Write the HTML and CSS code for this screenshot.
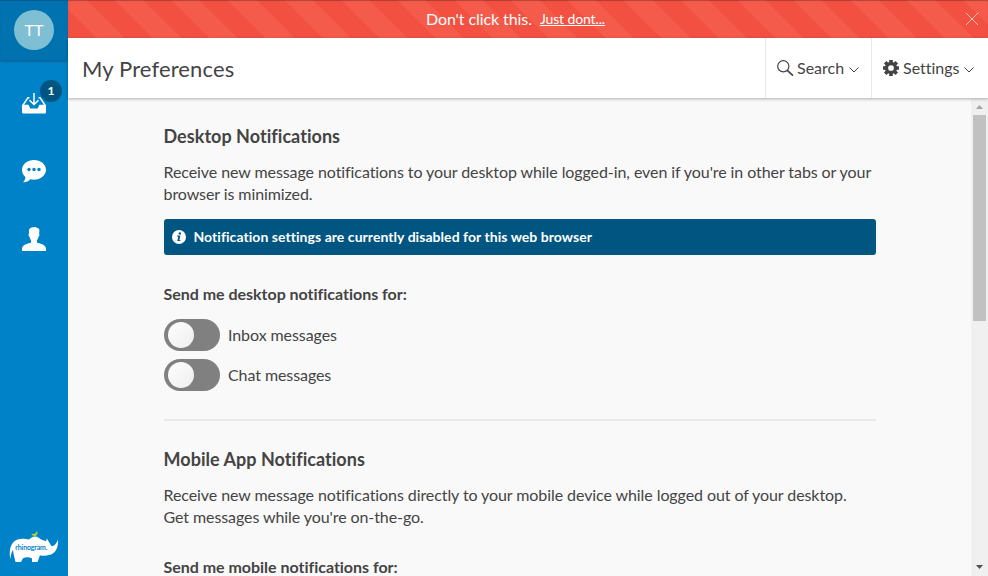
FILE: index.html
```html
<!DOCTYPE html>
<html lang="en">
<head>
<meta charset="utf-8">
<title>My Preferences</title>
<link rel="stylesheet" href="styles.css">
</head>
<body>
<div class="app">
  <nav class="sidebar">
    <div class="profile"><div class="avatar">TT</div></div>
    <a class="nav-item inbox">
      <svg width="24" height="22" viewBox="0 0 24 22" fill="none" stroke="#fff">
        <path d="M7.500 4.700H6L1 12.200M16.500 4.700H18L23 12.200" stroke-width="1.500"/>
        <path d="M0 11.700H6.500C7.300 12.200 7.500 15.500 9 15.500H15C16.500 15.500 16.700 12.200 17.500 11.700H24V19.300Q24 20.500 22.800 20.500H1.200Q0 20.500 0 19.300Z" fill="#fff" stroke="none"/>
        <path d="M12 0V11.300M7.500 7.200L12 11.500L16.500 7.200" stroke-width="1.500"/>
      </svg>
      <span class="badge">1</span>
    </a>
    <a class="nav-item">
      <svg width="24" height="23" viewBox="0 0 24 23">
        <path fill="#fff" d="M12 0C5.400 0 0 4.300 0 9.800c0 3.200 1.400 5.500 3.400 7.200 0 2-.8 3.700-2.400 5.200 3 .1 5.500-1 7.300-2.900 1.200.3 2.400.4 3.700.4 6.600 0 12-4.400 12-9.900S18.600 0 12 0Z"/>
        <g fill="#0082c8"><circle cx="7" cy="9.500" r="1.700"/><circle cx="12" cy="9.500" r="1.700"/><circle cx="17" cy="9.500" r="1.700"/></g>
      </svg>
    </a>
    <a class="nav-item contacts">
      <svg width="24" height="24" viewBox="0 0 24 24">
        <path fill="#fff" d="M7 2.300C8.500.7 10.500 0 12.500 0c1.200 0 2.100.5 2.600.9 1.500 0 2.400 1 2.300 2.500l-.3 3.400c.7.500.4 2.700-.6 3-.3 1.500-.8 2.600-1.500 3.400v2.200c2 1.300 8.900 1.200 9 6.400V24H0v-2.200c.1-5.200 7-5.100 9-6.400v-2.200c-.7-.8-1.200-1.900-1.500-3.400-1-.3-1.300-2.500-.6-3Z"/>
      </svg>
    </a>
    <svg class="logo" width="50" height="34" viewBox="0 0 50 34">
      <path fill="#fff" d="M1.500 28C-.1 22.500.7 15 4.500 11 9 6.500 15.500 7.800 20 8.600 23.500 5.200 27 4.600 30 7c2.500 1.900 4.300 2.300 7 3.200l1-2.700 2 3.700c1.300.9 1.400 3.700 3 4 3-.4 4.600-3 5.800-6.400 1 8-2.600 13.500-8.500 15.300-3.500 1-7.300.9-9.300.2L28.500 31h-5.500v-3.500c-3-1.500-6-1.500-9-.3L12 31H6.500L4.700 23.500 4 19c-1.700 2.500-2.200 5-2.500 9Z"/>
      <path fill="#a6ce39" d="M22 2.900l3.500-.2L28.300 0l.2 2.200c-.3 2.200-1.400 3-3.200 3l-.2 1.200-.8-1.300Z"/>
      <text x="6.300" y="19" class="logo-text" textLength="32" lengthAdjust="spacingAndGlyphs">rhinogram.</text>
    </svg>
  </nav>
  <div class="page">
    <div class="banner">
      <span>Don't click this.</span><a class="banner-link">Just dont...</a>
      <svg class="close" width="12" height="12" viewBox="0 0 12 12"><path d="M0 0L12 12M12 0L0 12" stroke="#fff" stroke-opacity=".65" fill="none"/></svg>
    </div>
    <header class="header">
      <h1>My Preferences</h1>
      <div class="action search">
        <svg width="17" height="17" viewBox="0 0 17 17" fill="none" stroke="#444"><circle cx="6.300" cy="6.300" r="5.600" stroke-width="1.200"/><path d="M10.300 10.300L16 15.700" stroke-width="1.700"/></svg>
        <span>Search</span>
        <svg class="chevron" width="10" height="6" viewBox="0 0 10 6"><path d="M.5.500L5 5L9.500.5" fill="none" stroke="#444"/></svg>
      </div>
      <div class="action settings">
        <svg width="16" height="16" viewBox="0 0 16 16"><g stroke="#444" stroke-width="3.600"><path d="M8 0V16M0 8H16M2.200 2.200L13.800 13.800M13.800 2.200L2.200 13.800"/></g><circle cx="8" cy="8" r="4.500" fill="#fff" stroke="#444" stroke-width="3.300"/></svg>
        <span>Settings</span>
        <svg class="chevron" width="10" height="6" viewBox="0 0 10 6"><path d="M.5.500L5 5L9.500.5" fill="none" stroke="#444"/></svg>
      </div>
    </header>
    <div class="body">
      <main class="content">
        <section>
          <h2>Desktop Notifications</h2>
          <p>Receive new message notifications to your desktop while logged-in, even if you're in other tabs or your browser is minimized.</p>
          <div class="notice">
            <svg width="14" height="14" viewBox="0 0 14 14"><circle cx="7" cy="7" r="7" fill="#fff"/><circle cx="7.800" cy="3.400" r="1.200" fill="#005581"/><path fill="#005581" d="M5 5.600h3.400L7.400 10h1l-.2.900H5.300L6.300 6.500H4.900Z"/></svg>
            <span>Notification settings are currently disabled for this web browser</span>
          </div>
          <h3>Send me desktop notifications for:</h3>
          <label class="option"><span class="toggle"><span class="knob"></span></span>Inbox messages</label>
          <label class="option"><span class="toggle"><span class="knob"></span></span>Chat messages</label>
        </section>
        <section class="mobile">
          <h2>Mobile App Notifications</h2>
          <p>Receive new message notifications directly to your mobile device while logged out of your desktop.<br>Get messages while you're on-the-go.</p>
          <h3 class="mobile-label">Send me mobile notifications for:</h3>
        </section>
      </main>
      <div class="scrollbar">
        <svg width="17" height="17" viewBox="0 0 17 17"><path d="M5 11L8.500 7L12 11Z" fill="#a3a3a3"/></svg>
        <div class="thumb"></div>
        <svg class="down" width="17" height="17" viewBox="0 0 17 17"><path d="M5 6L8.500 10L12 6Z" fill="#505050"/></svg>
      </div>
    </div>
  </div>
</div>
</body>
</html>
```
FILE: styles.css
```css
* { box-sizing: border-box; }
body {
  margin: 0;
  font: 16px/22px Lato, "Liberation Sans", sans-serif;
  font-variant-ligatures: none;
  letter-spacing: -.082px;
  color: #444;
  overflow: hidden;
}
h1, h2, h3, p { margin: 0; }
svg { display: block; flex: none; }
.app { display: flex; width: 988px; height: 576px; }
.sidebar {
  width: 68px;
  flex: none;
  background: #0082c8;
  display: flex;
  flex-direction: column;
  align-items: center;
}
.profile {
  width: 68px;
  height: 60px;
  background: #0072b0;
  box-shadow: 0 1px 3px rgba(0, 0, 0, .35), inset 0 1px 1px rgba(0, 0, 0, .2);
  clip-path: inset(0 0 -5px 0);
  padding: 10px 14px;
}
.avatar {
  width: 40px;
  height: 40px;
  border-radius: 50%;
  background: #7fbfd3;
  color: #fff;
  text-align: center;
  line-height: 40px;
  letter-spacing: 0;
}
.nav-item {
  position: relative;
  width: 68px;
  height: 68px;
  display: flex;
  justify-content: center;
  padding-top: 32px;
}
.inbox { padding-top: 33px; }
.contacts { padding-top: 31px; }
.badge {
  position: absolute;
  left: 40px;
  top: 20px;
  width: 22px;
  height: 22px;
  border-radius: 50%;
  background: #005581;
  color: #fff;
  font-weight: bold;
  font-size: 12px;
  text-align: center;
}
.logo { margin-top: auto; margin-bottom: 11px; }
.logo-text { font: 7.5px Lato, sans-serif; fill: #0082c8; stroke: #0082c8; stroke-width: .2px; }
.page { flex: 1; display: flex; flex-direction: column; min-width: 0; }
.banner {
  position: relative;
  height: 38px;
  flex: none;
  display: flex;
  align-items: center;
  justify-content: center;
  gap: 8px;
  padding-right: 25px;
  color: #fff;
  background: repeating-linear-gradient(45deg, #f25041 0 20px, #f45b4b 20px 40px);
  box-shadow: inset 0 1px 1px rgba(0, 0, 0, .25);
}
.banner-link { font-size: 14px; letter-spacing: -.12px; text-decoration: underline; }
.close { position: absolute; right: 10px; top: 13px; }
.header {
  position: relative;
  z-index: 1;
  height: 60px;
  flex: none;
  display: flex;
  background: #fff;
  box-shadow: 0 1px 3px rgba(0, 0, 0, .3);
}
h1 { flex: 1; padding-left: 14px; font-size: 22px; font-weight: 400; line-height: 62px; letter-spacing: .13px; }
.action { display: flex; align-items: center; border-left: 1px solid #e8e8e8; letter-spacing: 0; }
.search { width: 106px; padding-left: 11px; gap: 3px; }
.settings { width: 117px; padding-left: 11px; gap: 4px; }
.chevron { margin-top: 3px; }
.search .chevron { margin-left: 2px; }
.body { flex: 1; display: flex; min-height: 0; background: #f9f9f9; }
.content { flex: 1; padding: 27px 95px 0 96px; overflow: hidden; }
h2, h3, p { margin-left: -.5px; }
h2 { font-size: 18px; font-weight: bold; line-height: 22px; margin-bottom: 14px; letter-spacing: .04px; }
h3 { font-size: 16px; font-weight: bold; margin-bottom: 14px; letter-spacing: -.02px; }
.notice {
  display: flex;
  align-items: center;
  gap: 7.5px;
  height: 36px;
  margin: 14px 0 28px;
  padding-left: 8px;
  border-radius: 3px;
  background: #005581;
  color: #fff;
  font-size: 14px;
  font-weight: bold;
  letter-spacing: .05px;
}
.option { display: flex; align-items: center; gap: 8px; margin-bottom: 8px; }
.toggle { width: 56px; height: 32px; border-radius: 16px; background: #808080; padding: 3px 4px; }
.knob {
  display: block;
  width: 26px;
  height: 26px;
  border-radius: 50%;
  background: linear-gradient(135deg, #fff, #ededed);
}
.mobile { border-top: 2px solid #e8e8e8; margin-top: 28px; padding-top: 27px; }
.mobile-label { margin-top: 28px; }
.scrollbar {
  width: 17px;
  flex: none;
  background: #f0f0f0;
  display: flex;
  flex-direction: column;
}
.thumb { width: 13px; height: 206px; margin-left: 2px; background: #c1c1c1; }
.down { margin-top: auto; }
```
